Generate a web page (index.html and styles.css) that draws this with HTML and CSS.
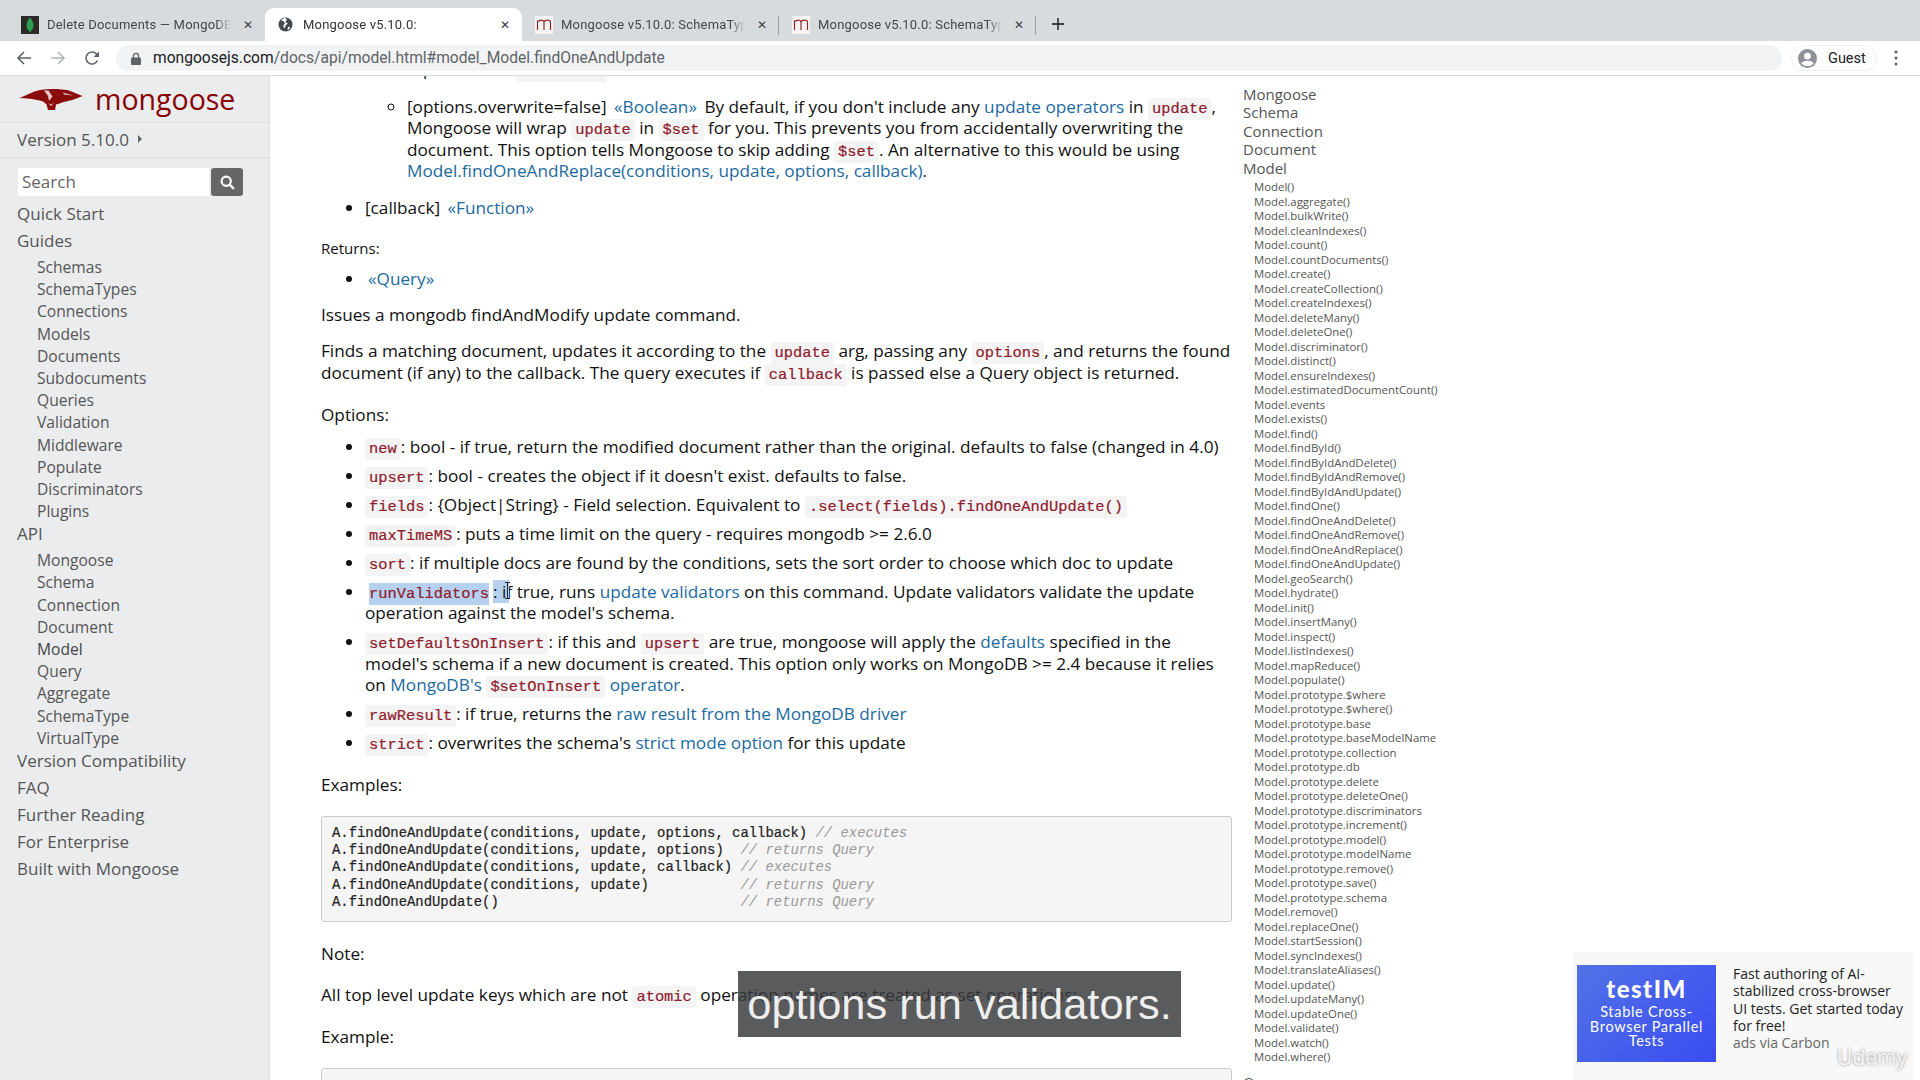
FILE: index.html
```html
<!DOCTYPE html>
<html lang="en">
<head>
    <meta charset="UTF-8">
    <title>Mongoose v5.10.0: Model</title>
    <link rel="stylesheet" href="styles.css">
</head>
<body>
    <div class="tabstrip">
        <div class="tab">
            <svg class="favicon" viewBox="0 0 18 18"><rect width="18" height="18" fill="#2b2a26"/><path d="M9 1.500C6 5 5.500 8 5.500 10c0 2.500 2 4 3.500 6.500C10.500 14 12.500 12.500 12.500 10c0-2-.5-5-3.500-8.500z" fill="#2f9e52"/></svg>
            <span class="tab-title">Delete Documents — MongoDB</span>
            <span class="tab-close">✕</span>
        </div>
        <div class="tab active">
            <svg class="favicon" viewBox="0 0 16 16"><circle cx="8" cy="8" r="7.500" fill="#45494d"/><path d="M3 3.500l3 1 1.500 2.500-2 2 1 3 1-.5.5-2.500 2.500-2-2.500-1.500L9.500 2 7 1zM11 10.500l2 .5-1.500 2.500-1.500-.5z" fill="#fff"/></svg>
            <span class="tab-title">Mongoose v5.10.0:</span>
            <span class="tab-close">✕</span>
        </div>
        <div class="tab">
            <svg class="favicon" viewBox="0 0 18 18"><rect width="18" height="18" fill="#f7f3f3"/><path d="M2.500 14V4.500M2.500 6c2-2.500 6-2.500 6.500 0v8M9 6c1-2.500 6-2.500 6.500 0v8" fill="none" stroke="#8d2a2a" stroke-width="1.200"/></svg>
            <span class="tab-title">Mongoose v5.10.0: SchemaTypes</span>
            <span class="tab-close">✕</span>
            <span class="tab-sep"></span>
        </div>
        <div class="tab">
            <svg class="favicon" viewBox="0 0 18 18"><rect width="18" height="18" fill="#f7f3f3"/><path d="M2.500 14V4.500M2.500 6c2-2.500 6-2.500 6.500 0v8M9 6c1-2.500 6-2.500 6.500 0v8" fill="none" stroke="#8d2a2a" stroke-width="1.200"/></svg>
            <span class="tab-title">Mongoose v5.10.0: SchemaTypes</span>
            <span class="tab-close">✕</span>
            <span class="tab-sep"></span>
        </div>
        <svg class="new-tab" viewBox="0 0 14 14"><path d="M7 1v12M1 7h12" stroke="#3c4043" stroke-width="1.800"/></svg>
    </div>

    <div class="toolbar">
        <svg class="nav-icon" viewBox="0 0 16 16"><path d="M15 8H2M8 2L2 8l6 6" fill="none" stroke="#5f6368" stroke-width="1.600"/></svg>
        <svg class="nav-icon" viewBox="0 0 16 16"><path d="M1 8h13M8 2l6 6-6 6" fill="none" stroke="#b4b7ba" stroke-width="1.600"/></svg>
        <svg class="nav-icon" viewBox="0 0 16 16"><path d="M13.500 10.500A6 6 0 1 1 12.500 4L14.500 6" fill="none" stroke="#5f6368" stroke-width="1.600"/><path d="M15 1.500V7H9.500z" fill="#5f6368"/></svg>
        <div class="omnibox">
            <svg class="lock" viewBox="0 0 10 13"><path d="M2.500 6V3.800a2.500 2.500 0 0 1 5 0V6" fill="none" stroke="#5f6368" stroke-width="1.300"/><rect y="5.500" width="10" height="7.500" rx="1" fill="#5f6368"/></svg>
            <span class="url"><b>mongoosejs.com</b>/docs/api/model.html#model_Model.findOneAndUpdate</span>
        </div>
        <div class="guest">
            <svg class="guest-icon" viewBox="0 0 20 20"><circle cx="10" cy="10" r="10" fill="#8d9096"/><circle cx="10" cy="7.500" r="3.500" fill="#fff"/><path d="M3.500 15c2-3.500 11-3.500 13 0-3 4-10 4-13 0z" fill="#fff"/></svg>
            <span>Guest</span>
        </div>
        <svg class="menu-dots" viewBox="0 0 4 16"><circle cx="2" cy="2" r="1.500"/><circle cx="2" cy="8" r="1.500"/><circle cx="2" cy="14" r="1.500"/></svg>
    </div>

    <div class="page">
        <div class="sidebar">
            <div class="logo-row">
                <svg class="logo-mark" viewBox="0 0 64 23">
                    <path d="M0 10C7 8 13 3.500 21 2 30 .5 41 .5 50 2.500L63.500 8C56 11.500 50 13 43 14.500c-2 1-4 1.500-6 2L36 22h-7l-1.500-5.500-3.500-3C18 11.500 12 10.500 0 10z" fill="#8a0d0d"/>
                    <path d="M25 2.500l4 5.500 1 5 3.500-4.500-4-6zM44 4.500l10 3-9-1zM29 15l3 3 3-3-3 1.500z" fill="#e6c6c6"/>
                </svg>
                <span class="logo-text">mongoose</span>
            </div>
            <div class="version-row">Version 5.10.0<span class="version-arrow"></span></div>
            <div class="search-row">
                <div class="search-input">Search</div>
                <div class="search-btn">
                    <svg viewBox="0 0 14 14"><circle cx="5.800" cy="5.800" r="4.300" fill="none" stroke="#fff" stroke-width="2"/><path d="M9 9l4 4" stroke="#fff" stroke-width="2.200"/></svg>
                </div>
            </div>
            <ul class="side-nav">
                <li class="side-top">Quick Start</li>
                <li class="side-top">Guides</li>
                <li class="side-sub">Schemas</li>
                <li class="side-sub">SchemaTypes</li>
                <li class="side-sub">Connections</li>
                <li class="side-sub">Models</li>
                <li class="side-sub">Documents</li>
                <li class="side-sub">Subdocuments</li>
                <li class="side-sub">Queries</li>
                <li class="side-sub">Validation</li>
                <li class="side-sub">Middleware</li>
                <li class="side-sub">Populate</li>
                <li class="side-sub">Discriminators</li>
                <li class="side-sub">Plugins</li>
                <li class="side-top">API</li>
                <li class="side-sub">Mongoose</li>
                <li class="side-sub">Schema</li>
                <li class="side-sub">Connection</li>
                <li class="side-sub">Document</li>
                <li class="side-sub current">Model</li>
                <li class="side-sub">Query</li>
                <li class="side-sub">Aggregate</li>
                <li class="side-sub">SchemaType</li>
                <li class="side-sub">VirtualType</li>
                <li class="side-top">Version Compatibility</li>
                <li class="side-top">FAQ</li>
                <li class="side-top">Further Reading</li>
                <li class="side-top">For Enterprise</li>
                <li class="side-top">Built with Mongoose</li>
            </ul>
        </div>

        <div class="content">
            <ul class="params">
                <li>
                    <ul class="sub-params">
                        <li>equivalent to <code>new: true</code>.</li>
                        <li>[options.overwrite=false] <a class="type">«Boolean»</a> By default, if you don't include any <a>update operators</a> in <code>update</code>, Mongoose will wrap <code>update</code> in <code>$set</code> for you. This prevents you from accidentally overwriting the document. This option tells Mongoose to skip adding <code>$set</code>. An alternative to this would be using <a>Model.findOneAndReplace(conditions, update, options, callback)</a>.</li>
                    </ul>
                </li>
                <li>[callback] <a class="type">«Function»</a></li>
            </ul>
            <h5>Returns:</h5>
            <ul class="params returns">
                <li><a class="type">«Query»</a></li>
            </ul>
            <p>Issues a mongodb findAndModify update command.</p>
            <p>Finds a matching document, updates it according to the <code>update</code> arg, passing any <code>options</code>, and returns the found document (if any) to the callback. The query executes if <code>callback</code> is passed else a Query object is returned.</p>
            <h4>Options:</h4>
            <ul class="options">
                <li><code>new</code>: bool - if true, return the modified document rather than the original. defaults to false (changed in 4.0)</li>
                <li><code>upsert</code>: bool - creates the object if it doesn't exist. defaults to false.</li>
                <li><code>fields</code>: {Object|String} - Field selection. Equivalent to <code>.select(fields).findOneAndUpdate()</code></li>
                <li><code>maxTimeMS</code>: puts a time limit on the query - requires mongodb &gt;= 2.6.0</li>
                <li><code>sort</code>: if multiple docs are found by the conditions, sets the sort order to choose which doc to update</li>
                <li><code class="selected">runValidators</code><span class="selected cursor-at">: i</span>f true, runs <a>update validators</a> on this command. Update validators validate the update operation against the model's schema.</li>
                <li><code>setDefaultsOnInsert</code>: if this and <code>upsert</code> are true, mongoose will apply the <a>defaults</a> specified in the model's schema if a new document is created. This option only works on MongoDB &gt;= 2.4 because it relies on <a>MongoDB's</a> <code>$setOnInsert</code> <a>operator</a>.</li>
                <li><code>rawResult</code>: if true, returns the <a>raw result from the MongoDB driver</a></li>
                <li><code>strict</code>: overwrites the schema's <a>strict mode option</a> for this update</li>
            </ul>
            <h4>Examples:</h4>
<pre>A.findOneAndUpdate(conditions, update, options, callback) <i>// executes</i>
A.findOneAndUpdate(conditions, update, options)  <i>// returns Query</i>
A.findOneAndUpdate(conditions, update, callback) <i>// executes</i>
A.findOneAndUpdate(conditions, update)           <i>// returns Query</i>
A.findOneAndUpdate()                             <i>// returns Query</i></pre>
            <h4>Note:</h4>
            <p>All top level update keys which are not <code>atomic</code> operation names are treated as set operations:</p>
            <h4>Example:</h4>
            <pre></pre>
        </div>

        <div class="toc">
            <ul class="toc-main">
                <li>Mongoose</li>
                <li>Schema</li>
                <li>Connection</li>
                <li>Document</li>
                <li>Model</li>
            </ul>
            <ul class="toc-sub">
                <li>Model()</li>
                <li>Model.aggregate()</li>
                <li>Model.bulkWrite()</li>
                <li>Model.cleanIndexes()</li>
                <li>Model.count()</li>
                <li>Model.countDocuments()</li>
                <li>Model.create()</li>
                <li>Model.createCollection()</li>
                <li>Model.createIndexes()</li>
                <li>Model.deleteMany()</li>
                <li>Model.deleteOne()</li>
                <li>Model.discriminator()</li>
                <li>Model.distinct()</li>
                <li>Model.ensureIndexes()</li>
                <li>Model.estimatedDocumentCount()</li>
                <li>Model.events</li>
                <li>Model.exists()</li>
                <li>Model.find()</li>
                <li>Model.findById()</li>
                <li>Model.findByIdAndDelete()</li>
                <li>Model.findByIdAndRemove()</li>
                <li>Model.findByIdAndUpdate()</li>
                <li>Model.findOne()</li>
                <li>Model.findOneAndDelete()</li>
                <li>Model.findOneAndRemove()</li>
                <li>Model.findOneAndReplace()</li>
                <li>Model.findOneAndUpdate()</li>
                <li>Model.geoSearch()</li>
                <li>Model.hydrate()</li>
                <li>Model.init()</li>
                <li>Model.insertMany()</li>
                <li>Model.inspect()</li>
                <li>Model.listIndexes()</li>
                <li>Model.mapReduce()</li>
                <li>Model.populate()</li>
                <li>Model.prototype.$where</li>
                <li>Model.prototype.$where()</li>
                <li>Model.prototype.base</li>
                <li>Model.prototype.baseModelName</li>
                <li>Model.prototype.collection</li>
                <li>Model.prototype.db</li>
                <li>Model.prototype.delete</li>
                <li>Model.prototype.deleteOne()</li>
                <li>Model.prototype.discriminators</li>
                <li>Model.prototype.increment()</li>
                <li>Model.prototype.model()</li>
                <li>Model.prototype.modelName</li>
                <li>Model.prototype.remove()</li>
                <li>Model.prototype.save()</li>
                <li>Model.prototype.schema</li>
                <li>Model.remove()</li>
                <li>Model.replaceOne()</li>
                <li>Model.startSession()</li>
                <li>Model.syncIndexes()</li>
                <li>Model.translateAliases()</li>
                <li>Model.update()</li>
                <li>Model.updateMany()</li>
                <li>Model.updateOne()</li>
                <li>Model.validate()</li>
                <li>Model.watch()</li>
                <li>Model.where()</li>
            </ul>
            <div class="toc-main toc-next">Query</div>
        </div>

        <div class="ad">
            <div class="ad-image">
                <div class="ad-brand">testIM</div>
                <div class="ad-tagline">Stable Cross-Browser Parallel Tests</div>
            </div>
            <div class="ad-copy">
                Fast authoring of AI-stabilized cross-browser UI tests. Get started today for free!
                <div class="ad-via">ads via Carbon</div>
            </div>
        </div>

        <div class="caption">options run validators.</div>
        <div class="watermark">Udemy</div>
    </div>
</body>
</html>
```

FILE: styles.css
```css
* {
    box-sizing: border-box;
}
html, body {
    height: 100%;
}
body {
    margin: 0;
    display: flex;
    flex-direction: column;
    overflow: hidden;
    background: white;
    color: #111;
    font-family: "Open Sans", sans-serif;
}
ul {
    margin: 0;
    padding: 0;
    list-style: none;
}

/* browser chrome */
.tabstrip {
    height: 41px;
    flex: none;
    display: flex;
    align-items: flex-end;
    padding-left: 8px;
    background-color: #d7dbde;
    font-family: Roboto, sans-serif;
    font-size: 13px;
    color: #44474a;
}
.tab {
    position: relative;
    width: 257px;
    height: 33px;
    display: flex;
    align-items: center;
    padding: 0 9px 0 13px;
    border-radius: 9px 9px 0 0;
}
.tab.active {
    background: white;
    color: #333;
}
.favicon {
    width: 18px;
    height: 18px;
    flex: none;
    margin-right: 8px;
}
.tab.active .favicon {
    width: 15px;
    height: 15px;
    margin-right: 10px;
}
.tab-title {
    flex: 1;
    white-space: nowrap;
    overflow: hidden;
    letter-spacing: 0.2px;
    -webkit-mask-image: linear-gradient(to right, black 92%, transparent);
    mask-image: linear-gradient(to right, black 92%, transparent);
}
.tab-close {
    width: 16px;
    margin-left: 9px;
    text-align: center;
    font-size: 12px;
    color: #3c4043;
}
.tab-sep {
    position: absolute;
    right: 0;
    top: 8px;
    width: 1px;
    height: 19px;
    background: #9a9ea2;
}
.new-tab {
    width: 14px;
    height: 14px;
    margin: 0 0 10px 15px;
}
.toolbar {
    height: 35px;
    flex: none;
    display: flex;
    align-items: center;
    padding: 0 22px 0 16px;
    background: white;
    border-bottom: 1px solid #d9dbdd;
}
.nav-icon {
    width: 16px;
    height: 16px;
    margin-right: 18px;
}
.omnibox {
    flex: 1;
    height: 26px;
    display: flex;
    align-items: center;
    margin-left: -2px;
    padding-left: 15px;
    border-radius: 13px;
    background-color: #f1f3f4;
    font-family: Roboto, sans-serif;
    font-size: 15.600px;
    color: #5f6368;
}
.lock {
    width: 10px;
    height: 13px;
    margin-right: 12px;
}
.url b {
    font-weight: 400;
    color: #202124;
}
.guest {
    width: 86px;
    height: 26px;
    display: flex;
    align-items: center;
    gap: 11px;
    margin: 0 17px 0 9px;
    padding-left: 6px;
    border: 1px solid #eff0f1;
    border-radius: 13px;
    font-family: Roboto, sans-serif;
    font-size: 14.500px;
    color: #202124;
}
.guest-icon {
    width: 19px;
    height: 19px;
}
.menu-dots {
    width: 4px;
    height: 16px;
    fill: #5f6368;
}

/* page */
.page {
    position: relative;
    flex: 1;
    min-height: 0;
    display: flex;
    overflow: hidden;
}

/* left sidebar */
.sidebar {
    width: 270px;
    flex: none;
    background-color: #ebecee;
    border-right: 1px solid #dcdddf;
    color: #555;
    font-size: 17px;
}
.logo-row {
    height: 47px;
    display: flex;
    align-items: center;
    padding-left: 19px;
    border-bottom: 1px solid #dfe0e2;
}
.logo-mark {
    width: 64px;
    height: 23px;
    margin-right: 12px;
}
.logo-text {
    font-size: 28.500px;
    line-height: 40px;
    color: #800;
}
.version-row {
    height: 35px;
    display: flex;
    align-items: center;
    padding: 0 0 2px 17px;
    border-bottom: 1px solid #dcdddf;
}
.version-arrow {
    width: 0;
    height: 0;
    margin-left: 9px;
    border-left: 4px solid #666;
    border-top: 4px solid transparent;
    border-bottom: 4px solid transparent;
}
.search-row {
    display: flex;
    gap: 2px;
    margin: 10px 0 4px 18px;
}
.search-input {
    width: 191px;
    height: 28px;
    padding-left: 4px;
    background: white;
    line-height: 28px;
    color: #666;
}
.search-btn {
    width: 32px;
    height: 28px;
    display: flex;
    align-items: center;
    justify-content: center;
    background-color: #666;
    border-radius: 3px;
}
.search-btn svg {
    width: 15px;
    height: 15px;
}
.side-top {
    height: 27px;
    padding-left: 17px;
    line-height: 27px;
}
.side-sub {
    height: 22.200px;
    padding-left: 37px;
    font-size: 15.600px;
    line-height: 22.200px;
}
.side-sub.current {
    color: #444;
}
.side-top + .side-sub {
    margin-top: 2px;
}
.side-sub + .side-top {
    margin-top: -2px;
}

/* main column */
.content {
    width: 911px;
    flex: none;
    margin: -18px 0 0 51px;
    font-size: 17.200px;
    line-height: 21.400px;
}
.content a {
    color: #1d6a9f;
}
.content a.type {
    margin: 0 3px;
}
.content p {
    margin: 0 0 15px;
}
.content h4 {
    margin: 21px 0 20px;
    font-size: 17.200px;
    font-weight: 400;
}
.content h5 {
    margin: 20px 0 9px;
    font-size: 15px;
    font-weight: 400;
}
code {
    padding: 2px 4px;
    background-color: #f4f4f4;
    border-radius: 3px;
    font-family: "Liberation Mono", monospace;
    font-size: 15.400px;
    line-height: 1;
    color: #8f1a2b;
    -webkit-text-stroke: 0.2px #8f1a2b;
}
code.selected {
    margin: 0 4px;
    padding: 2px 0;
    border-radius: 0;
    background-color: #b5d1ef;
}
.selected {
    background-color: #b5d1ef;
}
.cursor-at {
    position: relative;
    margin-right: -3px;
    padding-right: 3px;
}
.cursor-at::after {
    content: "";
    position: absolute;
    right: -1px;
    top: 2px;
    width: 5px;
    height: 15px;
    border: solid #222;
    border-width: 1px 0;
    background: linear-gradient(#222, #222) center / 1px 100% no-repeat;
}
.params, .options, .sub-params {
    list-style: disc;
}
.params, .options {
    padding-left: 44px;
}
.sub-params {
    list-style: circle;
    padding-left: 42px;
    margin-bottom: 15px;
}
.sub-params li {
    margin-bottom: 15px;
}
.sub-params li:first-child {
    margin-bottom: 16.500px;
}
.returns {
    margin-bottom: 14px;
}
.options li {
    margin-bottom: 7.500px;
}
.options {
    margin: -9px 0 19px;
}
pre {
    margin: 5px 0 17px;
    padding: 8px 8px 7px 10px;
    height: 106px;
    background-color: #f5f5f5;
    border: 1px solid #ccc;
    border-radius: 3px;
    font-family: "Liberation Mono", monospace;
    font-size: 13.900px;
    line-height: 17.300px;
    color: #222;
    -webkit-text-stroke: 0.2px #222;
}
pre i {
    color: #999;
    -webkit-text-stroke: 0;
}

/* right column */
.toc {
    width: 300px;
    flex: none;
    margin: 9px 0 0 11px;
    color: #555;
}
.toc-main li, .toc-next {
    font-size: 15px;
    line-height: 18.400px;
}
.toc-sub {
    margin-top: 3px;
    padding-left: 11px;
    font-size: 11.400px;
    line-height: 14.500px;
}
.toc-next {
    margin-top: 8px;
}

/* floating bits over the page */
.ad {
    position: absolute;
    left: 1573px;
    top: 876px;
    width: 340px;
    height: 130px;
    display: flex;
    padding: 13px 4px;
    background-color: #f8f8f9;
}
.ad-image {
    width: 139px;
    height: 97px;
    flex: none;
    padding-top: 11px;
    background: linear-gradient(135deg, #5272e6, #3a4cf2);
    color: white;
    text-align: center;
    font-family: Lato, sans-serif;
}
.ad-brand {
    font-size: 24px;
    line-height: 26px;
    font-weight: 900;
    letter-spacing: 1.500px;
}
.ad-tagline {
    margin-top: 3px;
    padding: 0 8px;
    font-size: 14.500px;
    line-height: 14.500px;
    letter-spacing: 0.700px;
}
.ad-copy {
    width: 172px;
    margin-left: 17px;
    font-size: 14px;
    line-height: 17.300px;
    color: #222;
}
.ad-via {
    color: #666;
}
.caption {
    position: absolute;
    left: 738px;
    top: 895px;
    width: 443px;
    height: 66px;
    background-color: rgba(57, 58, 60, 0.83);
    color: #eee;
    text-align: center;
    font-family: "Liberation Sans", sans-serif;
    font-size: 43.400px;
    line-height: 66px;
}
.watermark {
    position: absolute;
    right: 13px;
    top: 967px;
    font-size: 21px;
    line-height: 28px;
    color: rgba(255, 255, 255, 0.85);
    text-shadow: 0 0 3px rgba(90, 90, 90, 0.7);
}
```
